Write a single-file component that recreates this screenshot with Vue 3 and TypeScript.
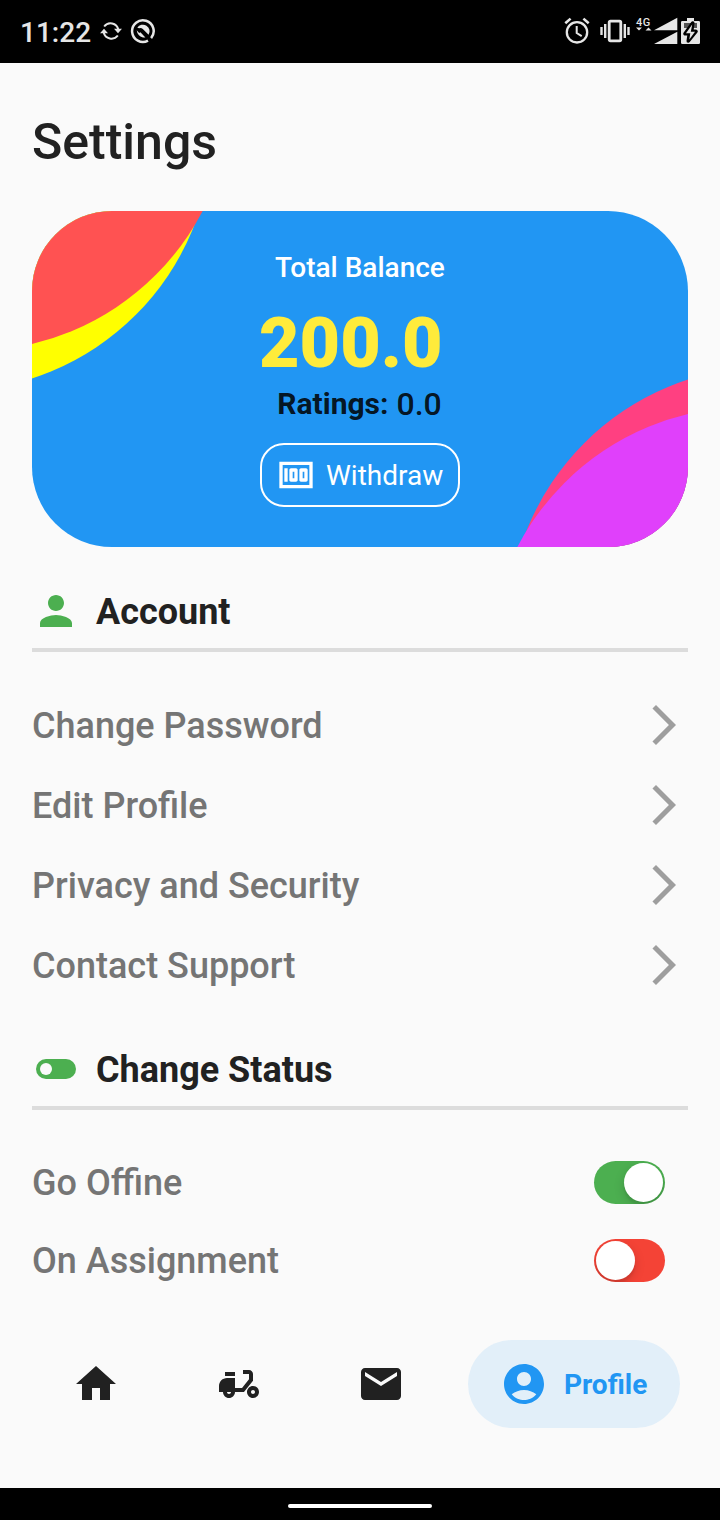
<script setup lang="ts">
import { ref } from 'vue'

interface StatusRow {
  label: string
  on: boolean
}

interface NavItem {
  name: string
  path: string
}

const accountLinks: string[] = ['Change Password', 'Edit Profile', 'Privacy and Security', 'Contact Support']

const statusRows = ref<StatusRow[]>([
  { label: 'Go Offine', on: true },
  { label: 'On Assignment', on: false },
])

const navItems: NavItem[] = [
  { name: 'home', path: 'M10 20v-6h4v6h5v-8h3L12 3 2 12h3v8z' },
  {
    name: 'delivery',
    path: 'M19 7c0-1.1-.9-2-2-2h-3v2h3v2.65L13.52 14H10V9H6c-2.21 0-4 1.79-4 4v3h2c0 1.66 1.34 3 3 3s3-1.34 3-3h4.48L19 10.35V7zM7 17c-.55 0-1-.45-1-1h2c0 .55-.45 1-1 1zM5 6h5v2H5zM19 13c-1.66 0-3 1.34-3 3s1.34 3 3 3 3-1.34 3-3-1.34-3-3-3zm0 4c-.55 0-1-.45-1-1s.45-1 1-1 1 .45 1 1-.45 1-1 1z',
  },
  {
    name: 'mail',
    path: 'M20 4H4c-1.1 0-1.99.9-1.99 2L2 18c0 1.1.9 2 2 2h16c1.1 0 2-.9 2-2V6c0-1.1-.9-2-2-2zm0 4l-8 5-8-5V6l8 5 8-5v2z',
  },
]
</script>

<template>
  <div class="screen">
    <header class="statusbar">
      <div class="status-left">
        <span class="clock">11:22</span>
        <svg class="sync" width="24" height="24" viewBox="0 0 24 24">
          <g fill="none" stroke="#e6e6e6" stroke-width="2">
            <path d="M5.200 7.500A8 8 0 0 1 19.300 10.500" />
            <path d="M18.800 16.500A8 8 0 0 1 4.700 13.500" />
          </g>
          <path fill="#e6e6e6" d="M15 9.800H23L19 14.200zM1 14.200H9L5 9.800z" />
        </svg>
        <svg class="badge" width="26" height="26" viewBox="0 0 26 26">
          <path d="M21.100 20.100A10.800 10.800 0 1 0 18 22.600" fill="none" stroke="#e6e6e6" stroke-width="2.500" />
          <path d="M7.300 9.800A6.600 6.600 0 1 1 18.600 16.800L12.800 11Q11.300 9.700 9.300 10.200z" fill="#e6e6e6" />
          <path d="M6.700 12.200Q7.400 17.800 13 19.400H15.400L10.400 14.200 9.200 15z" fill="#e6e6e6" />
        </svg>
      </div>
      <div class="status-right">
        <svg class="alarm" width="26" height="28" viewBox="0 0 26 28">
          <g fill="none" stroke="#e6e6e6">
            <circle cx="13" cy="15.300" r="10.200" stroke-width="2.300" />
            <path d="M12.700 9v7l5 3.200" stroke-width="2" />
            <path d="M1.300 6.300 6.600 1.600M24.700 6.300 19.400 1.600" stroke-width="2.600" />
          </g>
        </svg>
        <svg class="vibrate" width="30" height="24" viewBox="0 0 30 24">
          <rect x="9.200" y="2.200" width="11.600" height="19.600" rx="1.200" fill="none" stroke="#e6e6e6" stroke-width="2.800" />
          <path d="M1.500 8v8M5.200 5v14M24.800 5v14M28.500 8v8" stroke="#e6e6e6" stroke-width="2.400" />
        </svg>
        <div class="network">
          <span>4G</span>
          <svg width="16" height="4" viewBox="0 0 16 4"><path d="M0 .5h6L3 3.500zM9.500 3.500h6L12.500 .5z" fill="#e6e6e6" /></svg>
        </div>
        <svg class="signal" width="24" height="28" viewBox="0 0 24 28">
          <path d="M0 13.200 23.300.8v12.400zM0 27 23.300 14.800V27z" fill="#e6e6e6" />
        </svg>
        <svg class="battery" width="19" height="28" viewBox="0 0 19 28">
          <path d="M6 1h7v3h4.700a1.300 1.300 0 0 1 1.300 1.300V25.700a1.300 1.300 0 0 1-1.300 1.300H1.300A1.300 1.300 0 0 1 0 25.700V5.300A1.300 1.300 0 0 1 1.300 4H6z" fill="#e6e6e6" />
          <path d="M3 6h13v5H3z" fill="#555" />
          <path d="M11.700 6 4 16.800h4.300L7.300 24 15 14.300h-4.300z" fill="#e6e6e6" stroke="#000" stroke-width="3.600" stroke-linejoin="round" />
          <path d="M11.200 7.500 5 16.300h4.300L8.300 22.500 14 14.800H9.800z" fill="#e6e6e6" />
        </svg>
      </div>
    </header>

    <main class="content">
      <h1>Settings</h1>

      <section class="card">
        <svg class="card-art" width="656" height="336" viewBox="0 0 656 336">
          <circle cx="-80" cy="-80" r="260" fill="#ffff00" />
          <circle cx="-60" cy="-120" r="260" fill="#ff5252" />
          <circle cx="736" cy="416" r="260" fill="#ff4081" />
          <circle cx="716" cy="456" r="260" fill="#e040fb" />
        </svg>
        <div class="card-body">
          <div class="card-title">Total Balance</div>
          <div class="amount">200.0</div>
          <div class="ratings"><b>Ratings:</b><span>0.0</span></div>
          <button class="withdraw" type="button">
            <svg width="40" height="40" viewBox="0 0 24 24" fill="#fff">
              <path d="M2 4v16h20V4H2zm2 14V6h16v12H4zM5 8h2v8H5zM12 8H9c-.55 0-1 .45-1 1v6c0 .55.45 1 1 1h3c.55 0 1-.45 1-1V9c0-.55-.45-1-1-1zm-1 6h-1v-4h1v4zM18 8h-3c-.55 0-1 .45-1 1v6c0 .55.45 1 1 1h3c.55 0 1-.45 1-1V9c0-.55-.45-1-1-1zm-1 6h-1v-4h1v4z" />
            </svg>
            <span>Withdraw</span>
          </button>
        </div>
      </section>

      <section class="group account">
        <h2>
          <svg width="48" height="48" viewBox="0 0 24 24" fill="#4caf50">
            <path d="M12 12c2.210 0 4-1.790 4-4s-1.790-4-4-4-4 1.790-4 4 1.790 4 4 4zm0 2c-2.670 0-8 1.340-8 4v2h16v-2c0-2.660-5.330-4-8-4z" />
          </svg>
          <span>Account</span>
        </h2>
        <div v-for="label in accountLinks" :key="label" class="row">
          <span>{{ label }}</span>
          <svg width="48" height="48" viewBox="0 0 24 24" fill="#9e9e9e">
            <path d="M6.230 20.230 8 22l10-10L8 2 6.230 3.770 14.460 12z" />
          </svg>
        </div>
      </section>

      <section class="group status">
        <h2>
          <svg width="48" height="48" viewBox="0 0 24 24">
            <rect x="2" y="7" width="20" height="10" rx="5" fill="#4caf50" />
            <circle cx="7" cy="12" r="3" fill="#fafafa" />
          </svg>
          <span>Change Status</span>
        </h2>
        <div v-for="row in statusRows" :key="row.label" class="row">
          <span>{{ row.label }}</span>
          <div class="switch" :class="{ on: row.on }" @click="row.on = !row.on"><i></i></div>
        </div>
      </section>
    </main>

    <nav class="tabs">
      <div v-for="item in navItems" :key="item.name" class="tab">
        <svg width="48" height="48" viewBox="0 0 24 24" fill="#212121"><path :d="item.path" /></svg>
      </div>
      <div class="tab active">
        <svg width="48" height="48" viewBox="0 0 24 24" fill="#2196f3">
          <path d="M12 2C6.480 2 2 6.480 2 12s4.480 10 10 10 10-4.480 10-10S17.520 2 12 2zM12 6c1.930 0 3.500 1.570 3.500 3.500S13.930 13 12 13s-3.500-1.570-3.500-3.500S10.070 6 12 6zM12 20c-2.030 0-4.430-.820-6.140-2.880C7.550 15.800 9.680 15 12 15s4.450.800 6.140 2.120C16.430 19.180 14.030 20 12 20z" />
        </svg>
        <span>Profile</span>
      </div>
    </nav>

    <footer class="gesture"><i></i></footer>
  </div>
</template>

<style>
body {
  margin: 0;
  background: #fafafa;
}
</style>

<style scoped>
.screen {
  width: 720px;
  height: 1520px;
  display: flex;
  flex-direction: column;
  overflow: hidden;
  background: #fafafa;
  color: #212121;
  font-family: Roboto, 'Liberation Sans', sans-serif;
}
svg {
  display: block;
  flex: none;
}
.statusbar {
  height: 63px;
  box-sizing: border-box;
  flex: none;
  display: flex;
  justify-content: space-between;
  padding: 0 20px;
  background: #000;
  color: #e6e6e6;
}
.status-left,
.status-right {
  display: flex;
  align-items: flex-start;
}
.clock {
  width: 79px;
  margin-top: 17px;
  font-size: 28px;
  line-height: 32px;
  font-weight: 500;
  white-space: nowrap;
}
.sync {
  margin-top: 19px;
}
.badge {
  margin: 18px 0 0 7px;
}
.alarm {
  margin-top: 17px;
}
.vibrate {
  margin: 19px 0 0 10px;
}
.network {
  width: 24px;
  margin-top: 18px;
  display: flex;
  flex-direction: column;
  padding-left: 6px;
  box-sizing: border-box;
}
.network span {
  font-size: 11px;
  line-height: 10px;
  font-weight: 500;
  letter-spacing: 0.6px;
}
.network svg {
  margin-top: -1px;
}
.signal {
  margin-top: 17px;
}
.battery {
  margin: 17px 0 0 3px;
}
.content {
  flex: 1;
  padding: 49px 32px 0;
}
h1 {
  margin: 0 0 39px;
  font-size: 50px;
  line-height: 60px;
  font-weight: 500;
}
.card {
  position: relative;
  height: 336px;
  border-radius: 80px;
  overflow: hidden;
  background: #2196f3;
}
.card-art {
  position: absolute;
  inset: 0;
}
.card-body {
  position: relative;
  display: flex;
  flex-direction: column;
  align-items: center;
  padding-top: 40px;
}
.card-title {
  font-size: 28px;
  line-height: 33px;
  font-weight: 500;
  color: #fff;
}
.amount {
  width: 202px;
  margin-top: 18px;
  font-size: 70px;
  line-height: 82px;
  font-weight: 900;
  color: #ffeb3b;
}
.ratings {
  display: flex;
  align-items: flex-start;
  gap: 8px;
  height: 38px;
  line-height: 38px;
  font-size: 30px;
  color: rgba(0, 0, 0, 0.87);
}
.ratings b {
  margin-left: -1px;
  padding-top: 1px;
}
.ratings span {
  padding-top: 1px;
  font-size: 32px;
  font-weight: 500;
}
.withdraw {
  box-sizing: border-box;
  width: 200px;
  height: 64px;
  margin-top: 21px;
  padding: 0 0 0 14px;
  display: flex;
  align-items: center;
  gap: 10px;
  border: 2px solid #fff;
  border-radius: 24px;
  background: transparent;
  color: #fff;
  font-family: inherit;
  font-size: 28px;
}
.group h2 {
  height: 48px;
  margin: 40px 0 33px;
  padding-bottom: 13px;
  border-bottom: 4px solid #dcdcdc;
  display: flex;
  align-items: center;
  gap: 16px;
  font-size: 36px;
  font-weight: 700;
}
.group h2 span,
.row span {
  padding-top: 2px;
}
.row {
  height: 80px;
  display: flex;
  align-items: center;
  justify-content: space-between;
  font-size: 36px;
  font-weight: 500;
  color: #757575;
}
.status .row {
  height: 78px;
}
.switch {
  box-sizing: border-box;
  width: 71.4px;
  height: 43.4px;
  margin: 0.6px 23px 0 0;
  padding: 2.1px;
  display: flex;
  border-radius: 22px;
  overflow: hidden;
  background: #f44336;
}
.switch i {
  width: 39.2px;
  height: 39.2px;
  border-radius: 50%;
  background: #fff;
  box-shadow: 0 4px 11px rgba(0, 0, 0, 0.15), 0 4px 2px rgba(0, 0, 0, 0.06);
}
.switch.on {
  justify-content: flex-end;
  background: #4caf50;
}
.tabs {
  height: 148px;
  flex: none;
  box-sizing: border-box;
  padding: 0 40px 60px;
  display: flex;
  justify-content: space-between;
}
.tab {
  width: 112px;
  height: 88px;
  display: flex;
  align-items: center;
  justify-content: center;
}
.tab.active {
  width: 212px;
  box-sizing: border-box;
  padding-left: 32px;
  justify-content: flex-start;
  gap: 16px;
  border-radius: 44px;
  background: #e2eff9;
  color: #2196f3;
  font-size: 28px;
  font-weight: 700;
}
.gesture {
  height: 32px;
  flex: none;
  display: flex;
  justify-content: center;
  background: #000;
}
.gesture i {
  width: 144px;
  height: 4px;
  margin-top: 16px;
  border-radius: 2px;
  background: #fff;
}
</style>
